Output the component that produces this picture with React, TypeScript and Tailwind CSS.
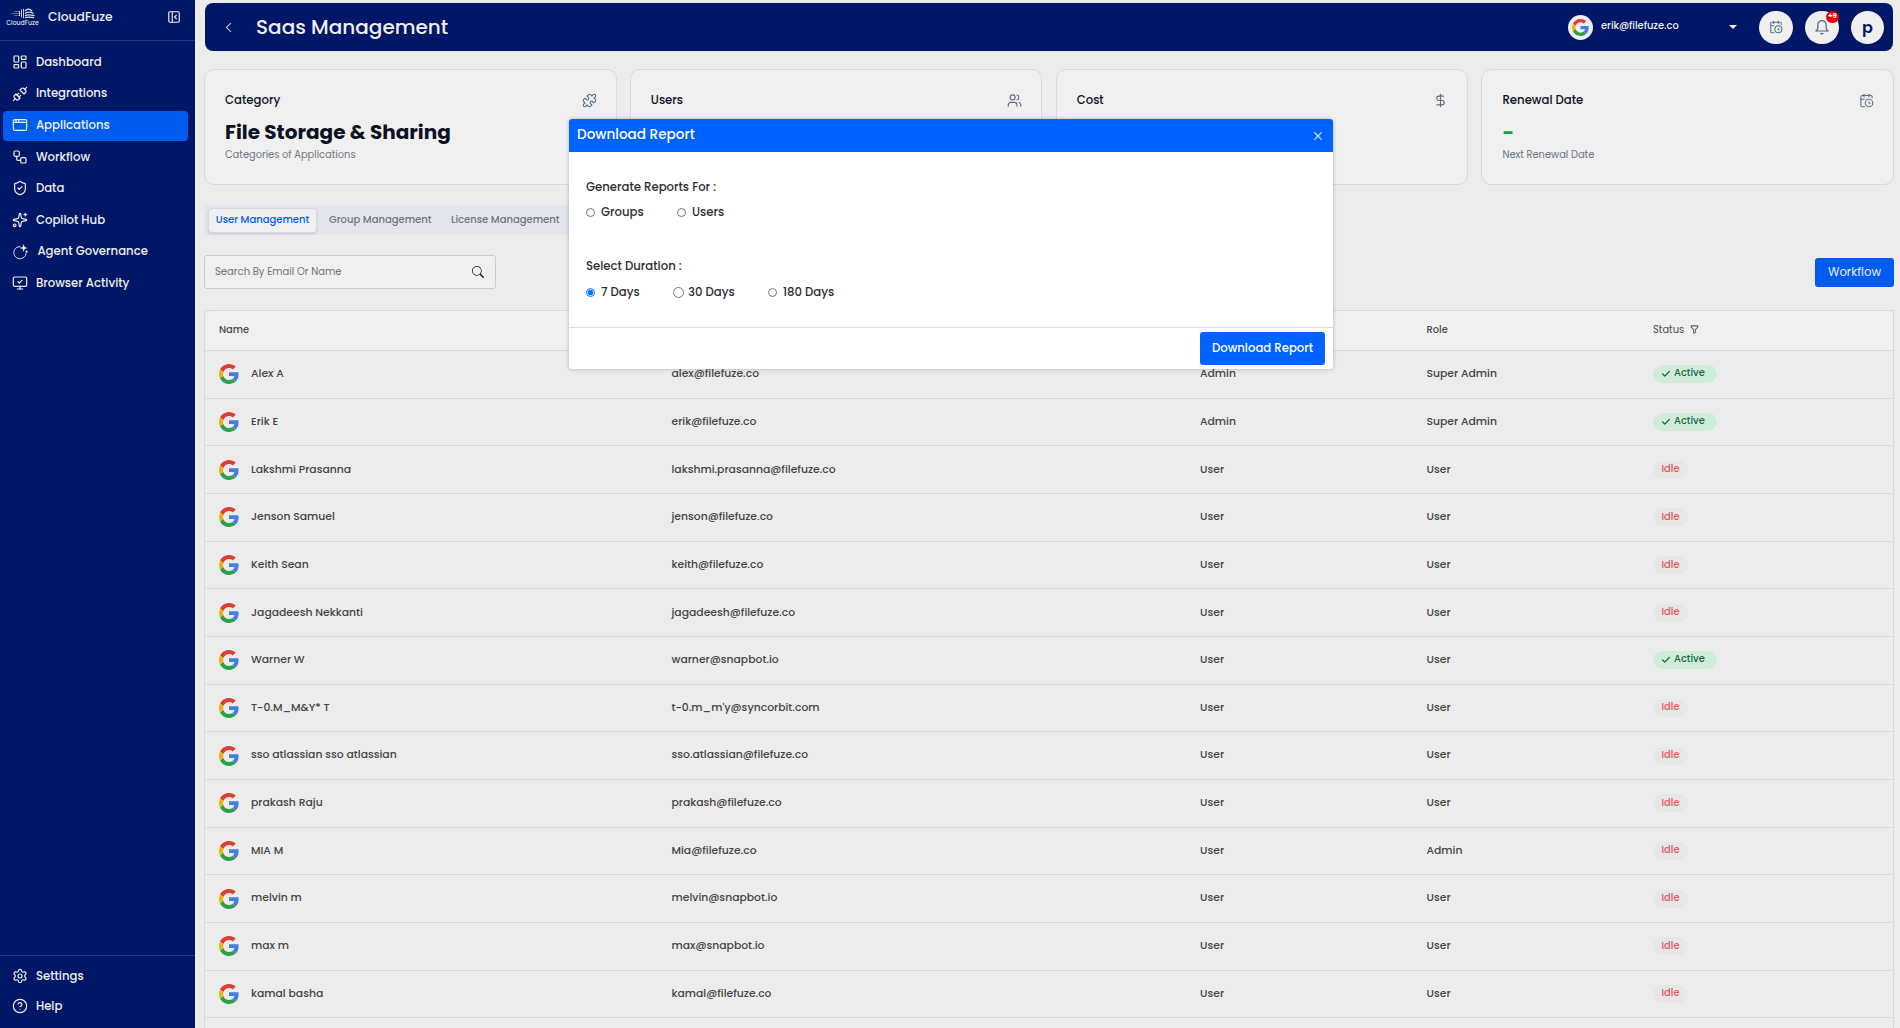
import React, { useState } from 'react';
import {
    AppWindow,
    CalendarClock,
    Check,
    CircleQuestionMark,
    DollarSign,
    LayoutDashboard,
    MonitorCheck,
    PanelLeftClose,
    Puzzle,
    Settings,
    ShieldCheck,
    Sparkles,
    Unplug,
    Users,
    Workflow,
} from 'lucide-react';
import { BsChevronLeft, BsFunnel, BsSearch, BsXLg } from 'react-icons/bs';
import { clsx } from 'clsx';

type Status = 'Active' | 'Idle';

interface Member {
    name: string;
    email: string;
    type: string;
    role: string;
    status: Status;
}

const members: Member[] = [
    { name: 'Alex A', email: 'alex@filefuze.co', type: 'Admin', role: 'Super Admin', status: 'Active' },
    { name: 'Erik E', email: 'erik@filefuze.co', type: 'Admin', role: 'Super Admin', status: 'Active' },
    { name: 'Lakshmi Prasanna', email: 'lakshmi.prasanna@filefuze.co', type: 'User', role: 'User', status: 'Idle' },
    { name: 'Jenson Samuel', email: 'jenson@filefuze.co', type: 'User', role: 'User', status: 'Idle' },
    { name: 'Keith Sean', email: 'keith@filefuze.co', type: 'User', role: 'User', status: 'Idle' },
    { name: 'Jagadeesh Nekkanti', email: 'jagadeesh@filefuze.co', type: 'User', role: 'User', status: 'Idle' },
    { name: 'Warner W', email: 'warner@snapbot.io', type: 'User', role: 'User', status: 'Active' },
    { name: 'T-0.M_M&Y* T', email: "t-0.m_m'y@syncorbit.com", type: 'User', role: 'User', status: 'Idle' },
    { name: 'sso atlassian sso atlassian', email: 'sso.atlassian@filefuze.co', type: 'User', role: 'User', status: 'Idle' },
    { name: 'prakash Raju', email: 'prakash@filefuze.co', type: 'User', role: 'User', status: 'Idle' },
    { name: 'MIA M', email: 'Mia@filefuze.co', type: 'User', role: 'Admin', status: 'Idle' },
    { name: 'melvin m', email: 'melvin@snapbot.io', type: 'User', role: 'User', status: 'Idle' },
    { name: 'max m', email: 'max@snapbot.io', type: 'User', role: 'User', status: 'Idle' },
    { name: 'kamal basha', email: 'kamal@filefuze.co', type: 'User', role: 'User', status: 'Idle' },
];

const GoogleIcon: React.FC<{ className?: string }> = ({ className }) => (
    <svg viewBox="0 0 48 48" className={className}>
        <path fill="#dc3f34" d="M24 9.5c3.54 0 6.71 1.22 9.21 3.6l6.85-6.85C35.9 2.38 30.47 0 24 0 14.62 0 6.51 5.38 2.56 13.22l7.98 6.19C12.43 13.72 17.74 9.5 24 9.5z" />
        <path fill="#3f7fe6" d="M46.98 24.55c0-1.57-.15-3.09-.38-4.55H24v9.02h12.94c-.58 2.96-2.26 5.48-4.78 7.18l7.73 6c4.51-4.18 7.09-10.36 7.09-17.65z" />
        <path fill="#ecb30a" d="M10.53 28.59c-.48-1.45-.76-2.99-.76-4.59s.27-3.14.76-4.59l-7.98-6.19C.92 16.46 0 20.12 0 24c0 3.88.92 7.54 2.56 10.78l7.97-6.19z" />
        <path fill="#2f9f4c" d="M24 48c6.48 0 11.93-2.13 15.89-5.81l-7.73-6c-2.15 1.45-4.92 2.3-8.16 2.3-6.26 0-11.57-4.22-13.47-9.91l-7.98 6.19C6.51 42.62 14.62 48 24 48z" />
    </svg>
);

const BellIcon: React.FC<{ className?: string }> = ({ className }) => (
    <svg viewBox="0 0 24 24" fill="none" stroke="currentColor" strokeWidth="1.8" strokeLinejoin="round" strokeLinecap="round" className={className}>
        <path d="M12 2.500a6.300 6.300 0 0 0-6.300 6.300v5.200c0 1.600-.9 2.800-3 4h18.600c-2.100-1.200-3-2.400-3-4V8.800A6.300 6.300 0 0 0 12 2.500z" />
        <path d="M9.800 21.500h4.400L12 23z" fill="currentColor" strokeWidth="1" />
    </svg>
);

// open ring with a spark in the top right corner
const AgentIcon: React.FC<{ className?: string }> = ({ className }) => (
    <svg viewBox="0 0 24 24" fill="none" stroke="currentColor" strokeWidth="1.5" strokeLinecap="round" className={className}>
        <path d="M12 4.200C7 3.600 2.800 7.500 2.800 13c0 5 4 9 9 9s9-3.500 9-7.500" strokeDasharray="6.500 1.400" />
        <path d="M17.500 0l1.500 4.500 4.500 1.500-4.500 1.500-1.500 4.500-1.500-4.500-4.500-1.500 4.500-1.500z" fill="currentColor" stroke="none" />
        <path d="M22 10v3M20.500 11.500h3" strokeWidth="1.200" />
    </svg>
);

const BrandLogo = () => (
    <div className="flex w-[33px] flex-col items-center">
        <svg viewBox="0 0 26 11" className="h-[11px] w-[26px]" fill="none" stroke="#d9deee">
            <path d="M1 5.500h10M4 3.500h6M4 7.500h6" strokeWidth="0.700" opacity="0.600" />
            <path d="M9.500 3v5M11.500 1.500v8M13.500.8v9.500" strokeWidth="0.900" />
            <path d="M15 3c2-2.500 5-2.500 7 0M15 5.500c3-2 6-1.500 8.500 0M15 7.700c3-1.500 6-1 9.500 0M15 9.700c3-1 6-.5 9 0" strokeWidth="1.300" />
        </svg>
        <span className="whitespace-nowrap text-[6.200px] font-medium leading-[8px] text-[#d9deee]">CloudFuze</span>
    </div>
);

interface NavEntry {
    label: string;
    icon: React.ElementType;
    active?: boolean;
    wide?: boolean;
}

const mainNav: NavEntry[] = [
    { label: 'Dashboard', icon: LayoutDashboard },
    { label: 'Integrations', icon: Unplug },
    { label: 'Applications', icon: AppWindow, active: true },
    { label: 'Workflow', icon: Workflow },
    { label: 'Data', icon: ShieldCheck },
    { label: 'Copilot Hub', icon: Sparkles },
    { label: 'Agent Governance', icon: AgentIcon, wide: true },
    { label: 'Browser Activity', icon: MonitorCheck },
];

const NavItem: React.FC<NavEntry> = ({ label, icon: Icon, active, wide }) => (
    <a
        className={clsx(
            'flex h-[30px] items-center rounded-[4px] pb-px pl-[9.400px] text-[11.700px] font-medium text-[#eeeeee]',
            active && 'bg-[#005cf0]',
            wide ? 'gap-[9px]' : 'gap-[7.500px]'
        )}
    >
        <Icon className="mb-px h-4 w-4 shrink-0" strokeWidth={1.8} />
        <span>{label}</span>
    </a>
);

const Sidebar = () => (
    <aside className="flex w-[195px] shrink-0 flex-col bg-[#001666] text-[#eeeeee]">
        <div className="flex h-[41px] items-center border-b border-[#26397b] pb-[6px] pl-[6px] pr-[14px]">
            <BrandLogo />
            <span className="ml-[9px] flex-1 text-[12.300px] font-medium">CloudFuze</span>
            <PanelLeftClose className="h-[14px] w-[14px]" />
        </div>
        <nav className="flex flex-1 flex-col gap-[1.600px] pl-[3px] pr-[7px] pt-[7px]">
            {mainNav.map((item) => (
                <NavItem key={item.label} {...item} />
            ))}
        </nav>
        <div className="flex flex-col border-t border-[#26397b] pb-[6px] pl-[3px] pr-[7px] pt-[6px]">
            <NavItem label="Settings" icon={Settings} />
            <NavItem label="Help" icon={CircleQuestionMark} />
        </div>
    </aside>
);

const TopBar = () => (
    <header className="mx-px flex h-[48px] items-center rounded-[8px] bg-[#001666] pl-[18px] pr-[9px] text-[#eeeeee]">
        <BsChevronLeft className="h-[11px] w-[11px] [stroke-width:0.500]" />
        <h1 className="ml-[22px] flex-1 text-[20px] font-medium leading-none">Saas Management</h1>
        <div className="flex h-[25px] w-[25px] items-center justify-center rounded-full bg-[#efefef]">
            <GoogleIcon className="h-[17px] w-[17px]" />
        </div>
        <span className="ml-2 w-[128px] pb-px text-[9.900px] font-medium">erik@filefuze.co</span>
        <span className="h-0 w-0 border-x-[4px] border-t-[4px] border-x-transparent border-t-[#eeeeee]" />
        <button className="ml-[22px] flex h-[33px] w-[34px] items-center justify-center rounded-full bg-[#efefef] text-[#5c6f84]">
            <CalendarClock className="h-[14px] w-[14px]" strokeWidth={1.8} />
        </button>
        <button className="relative ml-3 flex h-[33px] w-[34px] items-center justify-center rounded-full bg-[#efefef] text-[#51647c]">
            <BellIcon className="h-4 w-4" />
            <span className="absolute right-0 top-0 flex h-3 w-[13px] items-center justify-center rounded-full bg-[#ef0000] text-[7px] font-bold text-white">
                +9
            </span>
        </button>
        <div className="ml-3 flex h-[33px] w-[33px] items-center justify-center rounded-full bg-[#efefef] pt-px text-[16px] font-semibold text-[#001666]">
            p
        </div>
    </header>
);

interface StatCardProps {
    title: string;
    icon: React.ElementType;
    value?: string;
    valueClassName?: string;
    caption?: string;
}

const StatCard: React.FC<StatCardProps> = ({ title, icon: Icon, value, valueClassName, caption }) => (
    <div className="h-[116px] rounded-[10px] border border-[#d5d9e3] bg-[#f0f0f0] pl-5 pr-[19px] pt-[20px]">
        <div className="flex h-[20px] items-center justify-between">
            <span className="pt-px text-[11.700px] font-medium text-[#0b1220]">{title}</span>
            <Icon className="h-[15px] w-[15px] text-[#5c6f84]" strokeWidth={1.8} />
        </div>
        <div className={clsx('mt-[8px] h-[28px] text-[20px] font-bold leading-[28px]', valueClassName)}>{value}</div>
        <div className="pt-px text-[9.900px] leading-[16px] text-[#6b7685]">{caption}</div>
    </div>
);

const StatusPill: React.FC<{ status: Status }> = ({ status }) =>
    status === 'Active' ? (
        <span className="flex h-[18px] w-[64px] items-center gap-[3px] rounded-full bg-[#d0ecd9] pl-2 text-[9.900px] font-medium text-[#13683a]">
            <Check className="h-[10px] w-[10px]" strokeWidth={3} />
            <span className="pb-px">Active</span>
        </span>
    ) : (
        <span className="flex h-[18px] w-[35px] items-center justify-center rounded-full bg-[#e6e6e6] text-[9.900px] text-[#e8535c]">
            Idle
        </span>
    );

const columns = 'grid grid-cols-[452.5px_528.5px_226.5px_226.5px_1fr] items-center pl-[14px]';

const MembersTable = () => (
    <section className="border-x border-t border-[#d5d9e3]">
        <div className={clsx(columns, 'h-[40px] rounded-t-[8px] border-b border-[#d5d9e3] bg-[#f0f0f0] pb-px text-[9.900px] font-medium text-[#4a4a4a]')}>
            <span>Name</span>
            <span>Email</span>
            <span>Type</span>
            <span>Role</span>
            <span className="flex items-center gap-[6px] font-normal">
                Status <BsFunnel className="h-[9px] w-[9px] [stroke-width:0.500]" />
            </span>
        </div>
        {members.map((m) => (
            <div key={m.email} className={clsx(columns, 'h-[47.667px] border-b border-[#d5d9e3] text-[10.800px] font-medium text-[#444444]')}>
                <span className="flex items-center gap-3">
                    <GoogleIcon className="h-5 w-5" />
                    {m.name}
                </span>
                <span>{m.email}</span>
                <span>{m.type}</span>
                <span>{m.role}</span>
                <StatusPill status={m.status} />
            </div>
        ))}
        <div className="h-[47px]" />
    </section>
);

interface RadioOptionProps {
    label: string;
    checked: boolean;
    onSelect: () => void;
    large?: boolean;
}

const RadioOption: React.FC<RadioOptionProps> = ({ label, checked, onSelect, large }) => (
    <label className={clsx('flex h-[18px] items-center text-[11.700px] font-medium text-[#2b2f33]', large ? 'gap-1' : 'gap-[6px]')}>
        <input type="radio" checked={checked} onChange={onSelect} className={clsx('m-0', large ? 'h-[11px] w-[11px]' : 'h-[9px] w-[9px]')} />
        <span className="leading-[18px]">{label}</span>
    </label>
);

const DownloadReportModal = () => {
    const [target, setTarget] = useState('');
    const [days, setDays] = useState('7');

    return (
        <div className="absolute left-[569px] top-[119px] h-[250px] w-[764px] overflow-hidden rounded-[3px] bg-white shadow-[0_0_4px_rgba(0,0,0,0.250)]">
            <div className="flex h-[33px] items-center justify-between bg-[#0062ff] pl-2 pr-[10px] text-white">
                <h2 className="text-[13.600px] font-medium">Download Report</h2>
                <BsXLg className="h-[10px] w-[10px] [stroke-width:0.700]" />
            </div>
            <div className="h-[175px] pl-[17px] pt-[26px]">
                <p className="h-[18px] text-[11.700px] font-medium leading-[18px] text-[#2b2f33]">Generate Reports For :</p>
                <div className="mt-[7px] flex h-[18px]">
                    <div className="w-[91px]">
                        <RadioOption label="Groups" checked={target === 'groups'} onSelect={() => setTarget('groups')} />
                    </div>
                    <RadioOption label="Users" checked={target === 'users'} onSelect={() => setTarget('users')} />
                </div>
                <p className="mt-[36px] h-[18px] text-[11.700px] font-medium leading-[18px] text-[#2b2f33]">Select Duration :</p>
                <div className="mt-[8px] flex h-[18px]">
                    <div className="w-[87px]">
                        <RadioOption label="7 Days" checked={days === '7'} onSelect={() => setDays('7')} />
                    </div>
                    <div className="w-[95px]">
                        <RadioOption label="30 Days" checked={days === '30'} onSelect={() => setDays('30')} large />
                    </div>
                    <RadioOption label="180 Days" checked={days === '180'} onSelect={() => setDays('180')} />
                </div>
            </div>
            <div className="flex h-[42px] items-center justify-end border-t border-[#dadcde] pr-2">
                <button className="h-[33px] w-[125px] rounded-[3px] bg-[#0062ff] pt-px text-[11.700px] font-medium text-white">Download Report</button>
            </div>
        </div>
    );
};

export default function App() {
    return (
        <div className="relative flex h-[1028px] w-[1900px] overflow-hidden bg-[#ececec] font-['Poppins','Inter',sans-serif]">
            <Sidebar />
            <main className="min-w-0 flex-1 pl-[9px] pr-[6px] pt-[3px]">
                <TopBar />
                <div className="mt-[18px] grid grid-cols-4 gap-[13.300px]">
                    <StatCard title="Category" icon={Puzzle} value="File Storage & Sharing" valueClassName="text-[#0b1220]" caption="Categories of Applications" />
                    <StatCard title="Users" icon={Users} />
                    <StatCard title="Cost" icon={DollarSign} />
                    <StatCard title="Renewal Date" icon={CalendarClock} value="-" valueClassName="text-[#18a34a]" caption="Next Renewal Date" />
                </div>
                <div className="mt-5 flex h-[30px] w-[400px] items-center gap-3 bg-[#e2e5e9] pl-[4px] text-[10px] font-medium text-[#6b7685]">
                    <span className="flex h-[25px] w-[109px] items-center justify-center rounded-[4px] border border-[#d5d9e3] bg-[#f0f0f0] pb-px text-[#005cf0] shadow-sm">
                        User Management
                    </span>
                    <span className="w-[110px] whitespace-nowrap pb-px">Group Management</span>
                    <span className="whitespace-nowrap pb-px">License Management</span>
                </div>
                <div className="mt-5 flex items-center justify-between">
                    <div className="flex h-[34px] w-[292px] items-center justify-between rounded-[3px] border border-[#cccccc] bg-[#f0f0f0] pl-[10px] pr-[11px] text-[10px] text-[#757575]">
                        <span className="pb-px">Search By Email Or Name</span>
                        <BsSearch className="h-3 w-3 text-[#222222]" />
                    </div>
                    <button className="h-[29px] w-[79px] rounded-[3px] bg-[#005cf0] pt-px text-[11.700px] text-[#eeeeee]">Workflow</button>
                </div>
                <div className="mt-[21px]">
                    <MembersTable />
                </div>
            </main>
            <DownloadReportModal />
        </div>
    );
}
